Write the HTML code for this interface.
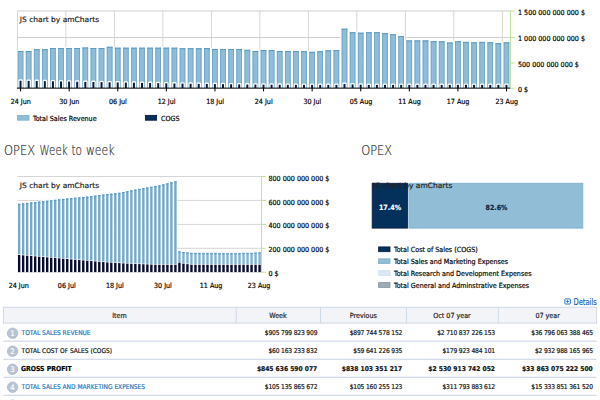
<!DOCTYPE html>
<html><head><meta charset="utf-8"><title>OPEX</title>
<style>
html,body{margin:0;padding:0;background:#fff;}
body{width:600px;height:400px;overflow:hidden;}
svg{display:block;font-family:"DejaVu Sans Condensed", "DejaVu Sans", "Liberation Sans", sans-serif;}
text{stroke-width:0.18px;}
</style></head><body>
<svg width="600" height="400" viewBox="0 0 600 400">
<rect x="16.98" y="11.0" width="0.84" height="77.0" fill="#cfcfcf"/>
<rect x="65.47" y="11.0" width="0.84" height="77.0" fill="#cfcfcf"/>
<rect x="113.96" y="11.0" width="0.84" height="77.0" fill="#cfcfcf"/>
<rect x="162.46" y="11.0" width="0.84" height="77.0" fill="#cfcfcf"/>
<rect x="210.95" y="11.0" width="0.84" height="77.0" fill="#cfcfcf"/>
<rect x="259.44" y="11.0" width="0.84" height="77.0" fill="#cfcfcf"/>
<rect x="307.93" y="11.0" width="0.84" height="77.0" fill="#cfcfcf"/>
<rect x="356.42" y="11.0" width="0.84" height="77.0" fill="#cfcfcf"/>
<rect x="404.92" y="11.0" width="0.84" height="77.0" fill="#cfcfcf"/>
<rect x="453.41" y="11.0" width="0.84" height="77.0" fill="#cfcfcf"/>
<rect x="501.90" y="11.0" width="0.84" height="77.0" fill="#cfcfcf"/>
<rect x="17.4" y="10.50" width="493.00" height="1" fill="#cfcfcf"/>
<rect x="17.4" y="37.00" width="493.00" height="1" fill="#cfcfcf"/>
<rect x="17.4" y="62.50" width="493.00" height="1" fill="#f1f1f1"/>
<rect x="16.52" y="50.00" width="8.02" height="38.00" fill="#fff"/>
<rect x="17.72" y="51.00" width="5.62" height="37.00" fill="#8fbcd6"/>
<rect x="17.72" y="51.00" width="0.9" height="37.00" fill="#70a7c6"/>
<rect x="22.44" y="51.00" width="0.9" height="37.00" fill="#70a7c6"/>
<rect x="17.72" y="51.00" width="5.62" height="1" fill="#5c9abf"/>
<rect x="18.28" y="79.31" width="4.5" height="8.69" rx="1.3" fill="#fff"/>
<rect x="19.53" y="80.71" width="2.0" height="7.29" fill="#0a1a3c"/>
<rect x="24.62" y="50.00" width="8.02" height="38.00" fill="#fff"/>
<rect x="25.82" y="51.00" width="5.62" height="37.00" fill="#8fbcd6"/>
<rect x="25.82" y="51.00" width="0.9" height="37.00" fill="#70a7c6"/>
<rect x="30.54" y="51.00" width="0.9" height="37.00" fill="#70a7c6"/>
<rect x="25.82" y="51.00" width="5.62" height="1" fill="#5c9abf"/>
<rect x="26.38" y="79.45" width="4.5" height="8.55" rx="1.3" fill="#fff"/>
<rect x="27.63" y="80.85" width="2.0" height="7.15" fill="#0a1a3c"/>
<rect x="32.72" y="48.20" width="8.02" height="39.80" fill="#fff"/>
<rect x="33.92" y="49.20" width="5.62" height="38.80" fill="#8fbcd6"/>
<rect x="33.92" y="49.20" width="0.9" height="38.80" fill="#70a7c6"/>
<rect x="38.64" y="49.20" width="0.9" height="38.80" fill="#70a7c6"/>
<rect x="33.92" y="49.20" width="5.62" height="1" fill="#5c9abf"/>
<rect x="34.48" y="79.60" width="4.5" height="8.40" rx="1.3" fill="#fff"/>
<rect x="35.73" y="81.00" width="2.0" height="7.00" fill="#0a1a3c"/>
<rect x="40.82" y="48.20" width="8.02" height="39.80" fill="#fff"/>
<rect x="42.02" y="49.20" width="5.62" height="38.80" fill="#8fbcd6"/>
<rect x="42.02" y="49.20" width="0.9" height="38.80" fill="#70a7c6"/>
<rect x="46.74" y="49.20" width="0.9" height="38.80" fill="#70a7c6"/>
<rect x="42.02" y="49.20" width="5.62" height="1" fill="#5c9abf"/>
<rect x="42.58" y="79.74" width="4.5" height="8.26" rx="1.3" fill="#fff"/>
<rect x="43.83" y="81.14" width="2.0" height="6.86" fill="#0a1a3c"/>
<rect x="48.92" y="47.00" width="8.02" height="41.00" fill="#fff"/>
<rect x="50.12" y="48.00" width="5.62" height="40.00" fill="#8fbcd6"/>
<rect x="50.12" y="48.00" width="0.9" height="40.00" fill="#70a7c6"/>
<rect x="54.84" y="48.00" width="0.9" height="40.00" fill="#70a7c6"/>
<rect x="50.12" y="48.00" width="5.62" height="1" fill="#5c9abf"/>
<rect x="50.68" y="79.88" width="4.5" height="8.12" rx="1.3" fill="#fff"/>
<rect x="51.93" y="81.28" width="2.0" height="6.72" fill="#0a1a3c"/>
<rect x="57.02" y="47.00" width="8.02" height="41.00" fill="#fff"/>
<rect x="58.22" y="48.00" width="5.62" height="40.00" fill="#8fbcd6"/>
<rect x="58.22" y="48.00" width="0.9" height="40.00" fill="#70a7c6"/>
<rect x="62.94" y="48.00" width="0.9" height="40.00" fill="#70a7c6"/>
<rect x="58.22" y="48.00" width="5.62" height="1" fill="#5c9abf"/>
<rect x="58.78" y="80.03" width="4.5" height="7.97" rx="1.3" fill="#fff"/>
<rect x="60.03" y="81.43" width="2.0" height="6.57" fill="#0a1a3c"/>
<rect x="65.11" y="47.00" width="8.02" height="41.00" fill="#fff"/>
<rect x="66.31" y="48.00" width="5.62" height="40.00" fill="#8fbcd6"/>
<rect x="66.31" y="48.00" width="0.9" height="40.00" fill="#70a7c6"/>
<rect x="71.03" y="48.00" width="0.9" height="40.00" fill="#70a7c6"/>
<rect x="66.31" y="48.00" width="5.62" height="1" fill="#5c9abf"/>
<rect x="66.87" y="80.17" width="4.5" height="7.83" rx="1.3" fill="#fff"/>
<rect x="68.12" y="81.57" width="2.0" height="6.43" fill="#0a1a3c"/>
<rect x="73.21" y="47.00" width="8.02" height="41.00" fill="#fff"/>
<rect x="74.41" y="48.00" width="5.62" height="40.00" fill="#8fbcd6"/>
<rect x="74.41" y="48.00" width="0.9" height="40.00" fill="#70a7c6"/>
<rect x="79.13" y="48.00" width="0.9" height="40.00" fill="#70a7c6"/>
<rect x="74.41" y="48.00" width="5.62" height="1" fill="#5c9abf"/>
<rect x="74.97" y="80.32" width="4.5" height="7.68" rx="1.3" fill="#fff"/>
<rect x="76.22" y="81.72" width="2.0" height="6.28" fill="#0a1a3c"/>
<rect x="81.31" y="46.50" width="8.02" height="41.50" fill="#fff"/>
<rect x="82.51" y="47.50" width="5.62" height="40.50" fill="#8fbcd6"/>
<rect x="82.51" y="47.50" width="0.9" height="40.50" fill="#70a7c6"/>
<rect x="87.23" y="47.50" width="0.9" height="40.50" fill="#70a7c6"/>
<rect x="82.51" y="47.50" width="5.62" height="1" fill="#5c9abf"/>
<rect x="83.07" y="80.46" width="4.5" height="7.54" rx="1.3" fill="#fff"/>
<rect x="84.32" y="81.86" width="2.0" height="6.14" fill="#0a1a3c"/>
<rect x="89.41" y="47.00" width="8.02" height="41.00" fill="#fff"/>
<rect x="90.61" y="48.00" width="5.62" height="40.00" fill="#8fbcd6"/>
<rect x="90.61" y="48.00" width="0.9" height="40.00" fill="#70a7c6"/>
<rect x="95.33" y="48.00" width="0.9" height="40.00" fill="#70a7c6"/>
<rect x="90.61" y="48.00" width="5.62" height="1" fill="#5c9abf"/>
<rect x="91.17" y="80.61" width="4.5" height="7.39" rx="1.3" fill="#fff"/>
<rect x="92.42" y="82.01" width="2.0" height="5.99" fill="#0a1a3c"/>
<rect x="97.51" y="47.00" width="8.02" height="41.00" fill="#fff"/>
<rect x="98.71" y="48.00" width="5.62" height="40.00" fill="#8fbcd6"/>
<rect x="98.71" y="48.00" width="0.9" height="40.00" fill="#70a7c6"/>
<rect x="103.43" y="48.00" width="0.9" height="40.00" fill="#70a7c6"/>
<rect x="98.71" y="48.00" width="5.62" height="1" fill="#5c9abf"/>
<rect x="99.27" y="80.75" width="4.5" height="7.25" rx="1.3" fill="#fff"/>
<rect x="100.52" y="82.15" width="2.0" height="5.85" fill="#0a1a3c"/>
<rect x="105.61" y="45.80" width="8.02" height="42.20" fill="#fff"/>
<rect x="106.81" y="46.80" width="5.62" height="41.20" fill="#8fbcd6"/>
<rect x="106.81" y="46.80" width="0.9" height="41.20" fill="#70a7c6"/>
<rect x="111.53" y="46.80" width="0.9" height="41.20" fill="#70a7c6"/>
<rect x="106.81" y="46.80" width="5.62" height="1" fill="#5c9abf"/>
<rect x="107.37" y="80.89" width="4.5" height="7.11" rx="1.3" fill="#fff"/>
<rect x="108.62" y="82.29" width="2.0" height="5.71" fill="#0a1a3c"/>
<rect x="113.71" y="46.70" width="8.02" height="41.30" fill="#fff"/>
<rect x="114.91" y="47.70" width="5.62" height="40.30" fill="#8fbcd6"/>
<rect x="114.91" y="47.70" width="0.9" height="40.30" fill="#70a7c6"/>
<rect x="119.63" y="47.70" width="0.9" height="40.30" fill="#70a7c6"/>
<rect x="114.91" y="47.70" width="5.62" height="1" fill="#5c9abf"/>
<rect x="115.47" y="81.04" width="4.5" height="6.96" rx="1.3" fill="#fff"/>
<rect x="116.72" y="82.44" width="2.0" height="5.56" fill="#0a1a3c"/>
<rect x="121.81" y="46.70" width="8.02" height="41.30" fill="#fff"/>
<rect x="123.01" y="47.70" width="5.62" height="40.30" fill="#8fbcd6"/>
<rect x="123.01" y="47.70" width="0.9" height="40.30" fill="#70a7c6"/>
<rect x="127.73" y="47.70" width="0.9" height="40.30" fill="#70a7c6"/>
<rect x="123.01" y="47.70" width="5.62" height="1" fill="#5c9abf"/>
<rect x="123.57" y="81.18" width="4.5" height="6.82" rx="1.3" fill="#fff"/>
<rect x="124.82" y="82.58" width="2.0" height="5.42" fill="#0a1a3c"/>
<rect x="129.91" y="46.70" width="8.02" height="41.30" fill="#fff"/>
<rect x="131.11" y="47.70" width="5.62" height="40.30" fill="#8fbcd6"/>
<rect x="131.11" y="47.70" width="0.9" height="40.30" fill="#70a7c6"/>
<rect x="135.83" y="47.70" width="0.9" height="40.30" fill="#70a7c6"/>
<rect x="131.11" y="47.70" width="5.62" height="1" fill="#5c9abf"/>
<rect x="131.67" y="81.33" width="4.5" height="6.67" rx="1.3" fill="#fff"/>
<rect x="132.92" y="82.73" width="2.0" height="5.27" fill="#0a1a3c"/>
<rect x="138.00" y="46.70" width="8.02" height="41.30" fill="#fff"/>
<rect x="139.20" y="47.70" width="5.62" height="40.30" fill="#8fbcd6"/>
<rect x="139.20" y="47.70" width="0.9" height="40.30" fill="#70a7c6"/>
<rect x="143.92" y="47.70" width="0.9" height="40.30" fill="#70a7c6"/>
<rect x="139.20" y="47.70" width="5.62" height="1" fill="#5c9abf"/>
<rect x="139.76" y="81.47" width="4.5" height="6.53" rx="1.3" fill="#fff"/>
<rect x="141.01" y="82.87" width="2.0" height="5.13" fill="#0a1a3c"/>
<rect x="146.10" y="46.70" width="8.02" height="41.30" fill="#fff"/>
<rect x="147.30" y="47.70" width="5.62" height="40.30" fill="#8fbcd6"/>
<rect x="147.30" y="47.70" width="0.9" height="40.30" fill="#70a7c6"/>
<rect x="152.02" y="47.70" width="0.9" height="40.30" fill="#70a7c6"/>
<rect x="147.30" y="47.70" width="5.62" height="1" fill="#5c9abf"/>
<rect x="147.86" y="81.62" width="4.5" height="6.38" rx="1.3" fill="#fff"/>
<rect x="149.11" y="83.02" width="2.0" height="4.98" fill="#0a1a3c"/>
<rect x="154.20" y="46.70" width="8.02" height="41.30" fill="#fff"/>
<rect x="155.40" y="47.70" width="5.62" height="40.30" fill="#8fbcd6"/>
<rect x="155.40" y="47.70" width="0.9" height="40.30" fill="#70a7c6"/>
<rect x="160.12" y="47.70" width="0.9" height="40.30" fill="#70a7c6"/>
<rect x="155.40" y="47.70" width="5.62" height="1" fill="#5c9abf"/>
<rect x="155.96" y="81.76" width="4.5" height="6.24" rx="1.3" fill="#fff"/>
<rect x="157.21" y="83.16" width="2.0" height="4.84" fill="#0a1a3c"/>
<rect x="162.30" y="46.70" width="8.02" height="41.30" fill="#fff"/>
<rect x="163.50" y="47.70" width="5.62" height="40.30" fill="#8fbcd6"/>
<rect x="163.50" y="47.70" width="0.9" height="40.30" fill="#70a7c6"/>
<rect x="168.22" y="47.70" width="0.9" height="40.30" fill="#70a7c6"/>
<rect x="163.50" y="47.70" width="5.62" height="1" fill="#5c9abf"/>
<rect x="164.06" y="81.90" width="4.5" height="6.10" rx="1.3" fill="#fff"/>
<rect x="165.31" y="83.30" width="2.0" height="4.70" fill="#0a1a3c"/>
<rect x="170.40" y="46.70" width="8.02" height="41.30" fill="#fff"/>
<rect x="171.60" y="47.70" width="5.62" height="40.30" fill="#8fbcd6"/>
<rect x="171.60" y="47.70" width="0.9" height="40.30" fill="#70a7c6"/>
<rect x="176.32" y="47.70" width="0.9" height="40.30" fill="#70a7c6"/>
<rect x="171.60" y="47.70" width="5.62" height="1" fill="#5c9abf"/>
<rect x="172.16" y="82.05" width="4.5" height="5.95" rx="1.3" fill="#fff"/>
<rect x="173.41" y="83.45" width="2.0" height="4.55" fill="#0a1a3c"/>
<rect x="178.50" y="47.20" width="8.02" height="40.80" fill="#fff"/>
<rect x="179.70" y="48.20" width="5.62" height="39.80" fill="#8fbcd6"/>
<rect x="179.70" y="48.20" width="0.9" height="39.80" fill="#70a7c6"/>
<rect x="184.42" y="48.20" width="0.9" height="39.80" fill="#70a7c6"/>
<rect x="179.70" y="48.20" width="5.62" height="1" fill="#5c9abf"/>
<rect x="180.26" y="82.19" width="4.5" height="5.81" rx="1.3" fill="#fff"/>
<rect x="181.51" y="83.59" width="2.0" height="4.41" fill="#0a1a3c"/>
<rect x="186.60" y="47.20" width="8.02" height="40.80" fill="#fff"/>
<rect x="187.80" y="48.20" width="5.62" height="39.80" fill="#8fbcd6"/>
<rect x="187.80" y="48.20" width="0.9" height="39.80" fill="#70a7c6"/>
<rect x="192.52" y="48.20" width="0.9" height="39.80" fill="#70a7c6"/>
<rect x="187.80" y="48.20" width="5.62" height="1" fill="#5c9abf"/>
<rect x="188.36" y="82.34" width="4.5" height="5.66" rx="1.3" fill="#fff"/>
<rect x="189.61" y="83.74" width="2.0" height="4.26" fill="#0a1a3c"/>
<rect x="194.70" y="47.20" width="8.02" height="40.80" fill="#fff"/>
<rect x="195.90" y="48.20" width="5.62" height="39.80" fill="#8fbcd6"/>
<rect x="195.90" y="48.20" width="0.9" height="39.80" fill="#70a7c6"/>
<rect x="200.62" y="48.20" width="0.9" height="39.80" fill="#70a7c6"/>
<rect x="195.90" y="48.20" width="5.62" height="1" fill="#5c9abf"/>
<rect x="196.46" y="82.48" width="4.5" height="5.52" rx="1.3" fill="#fff"/>
<rect x="197.71" y="83.88" width="2.0" height="4.12" fill="#0a1a3c"/>
<rect x="202.80" y="47.00" width="8.02" height="41.00" fill="#fff"/>
<rect x="204.00" y="48.00" width="5.62" height="40.00" fill="#8fbcd6"/>
<rect x="204.00" y="48.00" width="0.9" height="40.00" fill="#70a7c6"/>
<rect x="208.72" y="48.00" width="0.9" height="40.00" fill="#70a7c6"/>
<rect x="204.00" y="48.00" width="5.62" height="1" fill="#5c9abf"/>
<rect x="204.56" y="82.58" width="4.5" height="5.42" rx="1.3" fill="#fff"/>
<rect x="205.81" y="83.98" width="2.0" height="4.02" fill="#0a1a3c"/>
<rect x="210.90" y="48.00" width="8.02" height="40.00" fill="#fff"/>
<rect x="212.10" y="49.00" width="5.62" height="39.00" fill="#8fbcd6"/>
<rect x="212.10" y="49.00" width="0.9" height="39.00" fill="#70a7c6"/>
<rect x="216.82" y="49.00" width="0.9" height="39.00" fill="#70a7c6"/>
<rect x="212.10" y="49.00" width="5.62" height="1" fill="#5c9abf"/>
<rect x="212.66" y="82.68" width="4.5" height="5.32" rx="1.3" fill="#fff"/>
<rect x="213.91" y="84.08" width="2.0" height="3.92" fill="#0a1a3c"/>
<rect x="219.00" y="48.00" width="8.02" height="40.00" fill="#fff"/>
<rect x="220.19" y="49.00" width="5.62" height="39.00" fill="#8fbcd6"/>
<rect x="220.19" y="49.00" width="0.9" height="39.00" fill="#70a7c6"/>
<rect x="224.91" y="49.00" width="0.9" height="39.00" fill="#70a7c6"/>
<rect x="220.19" y="49.00" width="5.62" height="1" fill="#5c9abf"/>
<rect x="220.75" y="82.78" width="4.5" height="5.22" rx="1.3" fill="#fff"/>
<rect x="222.00" y="84.18" width="2.0" height="3.82" fill="#0a1a3c"/>
<rect x="227.09" y="48.00" width="8.02" height="40.00" fill="#fff"/>
<rect x="228.29" y="49.00" width="5.62" height="39.00" fill="#8fbcd6"/>
<rect x="228.29" y="49.00" width="0.9" height="39.00" fill="#70a7c6"/>
<rect x="233.01" y="49.00" width="0.9" height="39.00" fill="#70a7c6"/>
<rect x="228.29" y="49.00" width="5.62" height="1" fill="#5c9abf"/>
<rect x="228.85" y="82.88" width="4.5" height="5.12" rx="1.3" fill="#fff"/>
<rect x="230.10" y="84.28" width="2.0" height="3.72" fill="#0a1a3c"/>
<rect x="235.19" y="48.00" width="8.02" height="40.00" fill="#fff"/>
<rect x="236.39" y="49.00" width="5.62" height="39.00" fill="#8fbcd6"/>
<rect x="236.39" y="49.00" width="0.9" height="39.00" fill="#70a7c6"/>
<rect x="241.11" y="49.00" width="0.9" height="39.00" fill="#70a7c6"/>
<rect x="236.39" y="49.00" width="5.62" height="1" fill="#5c9abf"/>
<rect x="236.95" y="82.98" width="4.5" height="5.02" rx="1.3" fill="#fff"/>
<rect x="238.20" y="84.38" width="2.0" height="3.62" fill="#0a1a3c"/>
<rect x="243.29" y="48.80" width="8.02" height="39.20" fill="#fff"/>
<rect x="244.49" y="49.80" width="5.62" height="38.20" fill="#8fbcd6"/>
<rect x="244.49" y="49.80" width="0.9" height="38.20" fill="#70a7c6"/>
<rect x="249.21" y="49.80" width="0.9" height="38.20" fill="#70a7c6"/>
<rect x="244.49" y="49.80" width="5.62" height="1" fill="#5c9abf"/>
<rect x="245.05" y="83.08" width="4.5" height="4.92" rx="1.3" fill="#fff"/>
<rect x="246.30" y="84.48" width="2.0" height="3.52" fill="#0a1a3c"/>
<rect x="251.39" y="50.00" width="8.02" height="38.00" fill="#fff"/>
<rect x="252.59" y="51.00" width="5.62" height="37.00" fill="#8fbcd6"/>
<rect x="252.59" y="51.00" width="0.9" height="37.00" fill="#70a7c6"/>
<rect x="257.31" y="51.00" width="0.9" height="37.00" fill="#70a7c6"/>
<rect x="252.59" y="51.00" width="5.62" height="1" fill="#5c9abf"/>
<rect x="253.15" y="83.15" width="4.5" height="4.85" rx="1.3" fill="#fff"/>
<rect x="254.40" y="84.55" width="2.0" height="3.45" fill="#0a1a3c"/>
<rect x="259.49" y="49.00" width="8.02" height="39.00" fill="#fff"/>
<rect x="260.69" y="50.00" width="5.62" height="38.00" fill="#8fbcd6"/>
<rect x="260.69" y="50.00" width="0.9" height="38.00" fill="#70a7c6"/>
<rect x="265.41" y="50.00" width="0.9" height="38.00" fill="#70a7c6"/>
<rect x="260.69" y="50.00" width="5.62" height="1" fill="#5c9abf"/>
<rect x="261.25" y="83.21" width="4.5" height="4.79" rx="1.3" fill="#fff"/>
<rect x="262.50" y="84.61" width="2.0" height="3.39" fill="#0a1a3c"/>
<rect x="267.59" y="49.00" width="8.02" height="39.00" fill="#fff"/>
<rect x="268.79" y="50.00" width="5.62" height="38.00" fill="#8fbcd6"/>
<rect x="268.79" y="50.00" width="0.9" height="38.00" fill="#70a7c6"/>
<rect x="273.51" y="50.00" width="0.9" height="38.00" fill="#70a7c6"/>
<rect x="268.79" y="50.00" width="5.62" height="1" fill="#5c9abf"/>
<rect x="269.35" y="83.28" width="4.5" height="4.72" rx="1.3" fill="#fff"/>
<rect x="270.60" y="84.68" width="2.0" height="3.32" fill="#0a1a3c"/>
<rect x="275.69" y="50.00" width="8.02" height="38.00" fill="#fff"/>
<rect x="276.89" y="51.00" width="5.62" height="37.00" fill="#8fbcd6"/>
<rect x="276.89" y="51.00" width="0.9" height="37.00" fill="#70a7c6"/>
<rect x="281.61" y="51.00" width="0.9" height="37.00" fill="#70a7c6"/>
<rect x="276.89" y="51.00" width="5.62" height="1" fill="#5c9abf"/>
<rect x="277.45" y="83.34" width="4.5" height="4.66" rx="1.3" fill="#fff"/>
<rect x="278.70" y="84.74" width="2.0" height="3.26" fill="#0a1a3c"/>
<rect x="283.79" y="50.00" width="8.02" height="38.00" fill="#fff"/>
<rect x="284.99" y="51.00" width="5.62" height="37.00" fill="#8fbcd6"/>
<rect x="284.99" y="51.00" width="0.9" height="37.00" fill="#70a7c6"/>
<rect x="289.71" y="51.00" width="0.9" height="37.00" fill="#70a7c6"/>
<rect x="284.99" y="51.00" width="5.62" height="1" fill="#5c9abf"/>
<rect x="285.55" y="83.40" width="4.5" height="4.60" rx="1.3" fill="#fff"/>
<rect x="286.80" y="84.80" width="2.0" height="3.20" fill="#0a1a3c"/>
<rect x="291.89" y="50.20" width="8.02" height="37.80" fill="#fff"/>
<rect x="293.09" y="51.20" width="5.62" height="36.80" fill="#8fbcd6"/>
<rect x="293.09" y="51.20" width="0.9" height="36.80" fill="#70a7c6"/>
<rect x="297.81" y="51.20" width="0.9" height="36.80" fill="#70a7c6"/>
<rect x="293.09" y="51.20" width="5.62" height="1" fill="#5c9abf"/>
<rect x="293.65" y="83.47" width="4.5" height="4.53" rx="1.3" fill="#fff"/>
<rect x="294.90" y="84.87" width="2.0" height="3.13" fill="#0a1a3c"/>
<rect x="299.99" y="50.20" width="8.02" height="37.80" fill="#fff"/>
<rect x="301.19" y="51.20" width="5.62" height="36.80" fill="#8fbcd6"/>
<rect x="301.19" y="51.20" width="0.9" height="36.80" fill="#70a7c6"/>
<rect x="305.91" y="51.20" width="0.9" height="36.80" fill="#70a7c6"/>
<rect x="301.19" y="51.20" width="5.62" height="1" fill="#5c9abf"/>
<rect x="301.75" y="83.47" width="4.5" height="4.53" rx="1.3" fill="#fff"/>
<rect x="303.00" y="84.87" width="2.0" height="3.13" fill="#0a1a3c"/>
<rect x="308.08" y="50.80" width="8.02" height="37.20" fill="#fff"/>
<rect x="309.28" y="51.80" width="5.62" height="36.20" fill="#8fbcd6"/>
<rect x="309.28" y="51.80" width="0.9" height="36.20" fill="#70a7c6"/>
<rect x="314.00" y="51.80" width="0.9" height="36.20" fill="#70a7c6"/>
<rect x="309.28" y="51.80" width="5.62" height="1" fill="#5c9abf"/>
<rect x="309.84" y="83.47" width="4.5" height="4.53" rx="1.3" fill="#fff"/>
<rect x="311.09" y="84.87" width="2.0" height="3.13" fill="#0a1a3c"/>
<rect x="316.18" y="50.20" width="8.02" height="37.80" fill="#fff"/>
<rect x="317.38" y="51.20" width="5.62" height="36.80" fill="#8fbcd6"/>
<rect x="317.38" y="51.20" width="0.9" height="36.80" fill="#70a7c6"/>
<rect x="322.10" y="51.20" width="0.9" height="36.80" fill="#70a7c6"/>
<rect x="317.38" y="51.20" width="5.62" height="1" fill="#5c9abf"/>
<rect x="317.94" y="83.47" width="4.5" height="4.53" rx="1.3" fill="#fff"/>
<rect x="319.19" y="84.87" width="2.0" height="3.13" fill="#0a1a3c"/>
<rect x="324.28" y="49.30" width="8.02" height="38.70" fill="#fff"/>
<rect x="325.48" y="50.30" width="5.62" height="37.70" fill="#8fbcd6"/>
<rect x="325.48" y="50.30" width="0.9" height="37.70" fill="#70a7c6"/>
<rect x="330.20" y="50.30" width="0.9" height="37.70" fill="#70a7c6"/>
<rect x="325.48" y="50.30" width="5.62" height="1" fill="#5c9abf"/>
<rect x="326.04" y="83.47" width="4.5" height="4.53" rx="1.3" fill="#fff"/>
<rect x="327.29" y="84.87" width="2.0" height="3.13" fill="#0a1a3c"/>
<rect x="332.38" y="49.00" width="8.02" height="39.00" fill="#fff"/>
<rect x="333.58" y="50.00" width="5.62" height="38.00" fill="#8fbcd6"/>
<rect x="333.58" y="50.00" width="0.9" height="38.00" fill="#70a7c6"/>
<rect x="338.30" y="50.00" width="0.9" height="38.00" fill="#70a7c6"/>
<rect x="333.58" y="50.00" width="5.62" height="1" fill="#5c9abf"/>
<rect x="334.14" y="83.47" width="4.5" height="4.53" rx="1.3" fill="#fff"/>
<rect x="335.39" y="84.87" width="2.0" height="3.13" fill="#0a1a3c"/>
<rect x="340.48" y="27.70" width="8.02" height="60.30" fill="#fff"/>
<rect x="341.68" y="28.70" width="5.62" height="59.30" fill="#8fbcd6"/>
<rect x="341.68" y="28.70" width="0.9" height="59.30" fill="#70a7c6"/>
<rect x="346.40" y="28.70" width="0.9" height="59.30" fill="#70a7c6"/>
<rect x="341.68" y="28.70" width="5.62" height="1" fill="#5c9abf"/>
<rect x="342.24" y="82.57" width="4.5" height="5.43" rx="1.3" fill="#fff"/>
<rect x="343.49" y="83.97" width="2.0" height="4.03" fill="#0a1a3c"/>
<rect x="348.58" y="31.20" width="8.02" height="56.80" fill="#fff"/>
<rect x="349.78" y="32.20" width="5.62" height="55.80" fill="#8fbcd6"/>
<rect x="349.78" y="32.20" width="0.9" height="55.80" fill="#70a7c6"/>
<rect x="354.50" y="32.20" width="0.9" height="55.80" fill="#70a7c6"/>
<rect x="349.78" y="32.20" width="5.62" height="1" fill="#5c9abf"/>
<rect x="350.34" y="83.00" width="4.5" height="5.00" rx="1.3" fill="#fff"/>
<rect x="351.59" y="84.40" width="2.0" height="3.60" fill="#0a1a3c"/>
<rect x="356.68" y="31.70" width="8.02" height="56.30" fill="#fff"/>
<rect x="357.88" y="32.70" width="5.62" height="55.30" fill="#8fbcd6"/>
<rect x="357.88" y="32.70" width="0.9" height="55.30" fill="#70a7c6"/>
<rect x="362.60" y="32.70" width="0.9" height="55.30" fill="#70a7c6"/>
<rect x="357.88" y="32.70" width="5.62" height="1" fill="#5c9abf"/>
<rect x="358.44" y="83.25" width="4.5" height="4.75" rx="1.3" fill="#fff"/>
<rect x="359.69" y="84.65" width="2.0" height="3.35" fill="#0a1a3c"/>
<rect x="364.78" y="31.20" width="8.02" height="56.80" fill="#fff"/>
<rect x="365.98" y="32.20" width="5.62" height="55.80" fill="#8fbcd6"/>
<rect x="365.98" y="32.20" width="0.9" height="55.80" fill="#70a7c6"/>
<rect x="370.70" y="32.20" width="0.9" height="55.80" fill="#70a7c6"/>
<rect x="365.98" y="32.20" width="5.62" height="1" fill="#5c9abf"/>
<rect x="366.54" y="83.47" width="4.5" height="4.53" rx="1.3" fill="#fff"/>
<rect x="367.79" y="84.87" width="2.0" height="3.13" fill="#0a1a3c"/>
<rect x="372.88" y="31.20" width="8.02" height="56.80" fill="#fff"/>
<rect x="374.08" y="32.20" width="5.62" height="55.80" fill="#8fbcd6"/>
<rect x="374.08" y="32.20" width="0.9" height="55.80" fill="#70a7c6"/>
<rect x="378.80" y="32.20" width="0.9" height="55.80" fill="#70a7c6"/>
<rect x="374.08" y="32.20" width="5.62" height="1" fill="#5c9abf"/>
<rect x="374.64" y="83.47" width="4.5" height="4.53" rx="1.3" fill="#fff"/>
<rect x="375.89" y="84.87" width="2.0" height="3.13" fill="#0a1a3c"/>
<rect x="380.97" y="32.20" width="8.02" height="55.80" fill="#fff"/>
<rect x="382.17" y="33.20" width="5.62" height="54.80" fill="#8fbcd6"/>
<rect x="382.17" y="33.20" width="0.9" height="54.80" fill="#70a7c6"/>
<rect x="386.89" y="33.20" width="0.9" height="54.80" fill="#70a7c6"/>
<rect x="382.17" y="33.20" width="5.62" height="1" fill="#5c9abf"/>
<rect x="382.73" y="83.47" width="4.5" height="4.53" rx="1.3" fill="#fff"/>
<rect x="383.98" y="84.87" width="2.0" height="3.13" fill="#0a1a3c"/>
<rect x="389.07" y="33.20" width="8.02" height="54.80" fill="#fff"/>
<rect x="390.27" y="34.20" width="5.62" height="53.80" fill="#8fbcd6"/>
<rect x="390.27" y="34.20" width="0.9" height="53.80" fill="#70a7c6"/>
<rect x="394.99" y="34.20" width="0.9" height="53.80" fill="#70a7c6"/>
<rect x="390.27" y="34.20" width="5.62" height="1" fill="#5c9abf"/>
<rect x="390.83" y="83.47" width="4.5" height="4.53" rx="1.3" fill="#fff"/>
<rect x="392.08" y="84.87" width="2.0" height="3.13" fill="#0a1a3c"/>
<rect x="397.17" y="35.10" width="8.02" height="52.90" fill="#fff"/>
<rect x="398.37" y="36.10" width="5.62" height="51.90" fill="#8fbcd6"/>
<rect x="398.37" y="36.10" width="0.9" height="51.90" fill="#70a7c6"/>
<rect x="403.09" y="36.10" width="0.9" height="51.90" fill="#70a7c6"/>
<rect x="398.37" y="36.10" width="5.62" height="1" fill="#5c9abf"/>
<rect x="398.93" y="83.47" width="4.5" height="4.53" rx="1.3" fill="#fff"/>
<rect x="400.18" y="84.87" width="2.0" height="3.13" fill="#0a1a3c"/>
<rect x="405.27" y="39.40" width="8.02" height="48.60" fill="#fff"/>
<rect x="406.47" y="40.40" width="5.62" height="47.60" fill="#8fbcd6"/>
<rect x="406.47" y="40.40" width="0.9" height="47.60" fill="#70a7c6"/>
<rect x="411.19" y="40.40" width="0.9" height="47.60" fill="#70a7c6"/>
<rect x="406.47" y="40.40" width="5.62" height="1" fill="#5c9abf"/>
<rect x="407.03" y="83.47" width="4.5" height="4.53" rx="1.3" fill="#fff"/>
<rect x="408.28" y="84.87" width="2.0" height="3.13" fill="#0a1a3c"/>
<rect x="413.37" y="39.40" width="8.02" height="48.60" fill="#fff"/>
<rect x="414.57" y="40.40" width="5.62" height="47.60" fill="#8fbcd6"/>
<rect x="414.57" y="40.40" width="0.9" height="47.60" fill="#70a7c6"/>
<rect x="419.29" y="40.40" width="0.9" height="47.60" fill="#70a7c6"/>
<rect x="414.57" y="40.40" width="5.62" height="1" fill="#5c9abf"/>
<rect x="415.13" y="83.47" width="4.5" height="4.53" rx="1.3" fill="#fff"/>
<rect x="416.38" y="84.87" width="2.0" height="3.13" fill="#0a1a3c"/>
<rect x="421.47" y="39.40" width="8.02" height="48.60" fill="#fff"/>
<rect x="422.67" y="40.40" width="5.62" height="47.60" fill="#8fbcd6"/>
<rect x="422.67" y="40.40" width="0.9" height="47.60" fill="#70a7c6"/>
<rect x="427.39" y="40.40" width="0.9" height="47.60" fill="#70a7c6"/>
<rect x="422.67" y="40.40" width="5.62" height="1" fill="#5c9abf"/>
<rect x="423.23" y="83.47" width="4.5" height="4.53" rx="1.3" fill="#fff"/>
<rect x="424.48" y="84.87" width="2.0" height="3.13" fill="#0a1a3c"/>
<rect x="429.57" y="40.20" width="8.02" height="47.80" fill="#fff"/>
<rect x="430.77" y="41.20" width="5.62" height="46.80" fill="#8fbcd6"/>
<rect x="430.77" y="41.20" width="0.9" height="46.80" fill="#70a7c6"/>
<rect x="435.49" y="41.20" width="0.9" height="46.80" fill="#70a7c6"/>
<rect x="430.77" y="41.20" width="5.62" height="1" fill="#5c9abf"/>
<rect x="431.33" y="83.47" width="4.5" height="4.53" rx="1.3" fill="#fff"/>
<rect x="432.58" y="84.87" width="2.0" height="3.13" fill="#0a1a3c"/>
<rect x="437.67" y="40.20" width="8.02" height="47.80" fill="#fff"/>
<rect x="438.87" y="41.20" width="5.62" height="46.80" fill="#8fbcd6"/>
<rect x="438.87" y="41.20" width="0.9" height="46.80" fill="#70a7c6"/>
<rect x="443.59" y="41.20" width="0.9" height="46.80" fill="#70a7c6"/>
<rect x="438.87" y="41.20" width="5.62" height="1" fill="#5c9abf"/>
<rect x="439.43" y="83.47" width="4.5" height="4.53" rx="1.3" fill="#fff"/>
<rect x="440.68" y="84.87" width="2.0" height="3.13" fill="#0a1a3c"/>
<rect x="445.77" y="41.50" width="8.02" height="46.50" fill="#fff"/>
<rect x="446.97" y="42.50" width="5.62" height="45.50" fill="#8fbcd6"/>
<rect x="446.97" y="42.50" width="0.9" height="45.50" fill="#70a7c6"/>
<rect x="451.69" y="42.50" width="0.9" height="45.50" fill="#70a7c6"/>
<rect x="446.97" y="42.50" width="5.62" height="1" fill="#5c9abf"/>
<rect x="447.53" y="83.47" width="4.5" height="4.53" rx="1.3" fill="#fff"/>
<rect x="448.78" y="84.87" width="2.0" height="3.13" fill="#0a1a3c"/>
<rect x="453.87" y="40.20" width="8.02" height="47.80" fill="#fff"/>
<rect x="455.07" y="41.20" width="5.62" height="46.80" fill="#8fbcd6"/>
<rect x="455.07" y="41.20" width="0.9" height="46.80" fill="#70a7c6"/>
<rect x="459.79" y="41.20" width="0.9" height="46.80" fill="#70a7c6"/>
<rect x="455.07" y="41.20" width="5.62" height="1" fill="#5c9abf"/>
<rect x="455.63" y="83.47" width="4.5" height="4.53" rx="1.3" fill="#fff"/>
<rect x="456.88" y="84.87" width="2.0" height="3.13" fill="#0a1a3c"/>
<rect x="461.96" y="40.90" width="8.02" height="47.10" fill="#fff"/>
<rect x="463.16" y="41.90" width="5.62" height="46.10" fill="#8fbcd6"/>
<rect x="463.16" y="41.90" width="0.9" height="46.10" fill="#70a7c6"/>
<rect x="467.88" y="41.90" width="0.9" height="46.10" fill="#70a7c6"/>
<rect x="463.16" y="41.90" width="5.62" height="1" fill="#5c9abf"/>
<rect x="463.72" y="83.47" width="4.5" height="4.53" rx="1.3" fill="#fff"/>
<rect x="464.97" y="84.87" width="2.0" height="3.13" fill="#0a1a3c"/>
<rect x="470.06" y="41.30" width="8.02" height="46.70" fill="#fff"/>
<rect x="471.26" y="42.30" width="5.62" height="45.70" fill="#8fbcd6"/>
<rect x="471.26" y="42.30" width="0.9" height="45.70" fill="#70a7c6"/>
<rect x="475.98" y="42.30" width="0.9" height="45.70" fill="#70a7c6"/>
<rect x="471.26" y="42.30" width="5.62" height="1" fill="#5c9abf"/>
<rect x="471.82" y="83.47" width="4.5" height="4.53" rx="1.3" fill="#fff"/>
<rect x="473.07" y="84.87" width="2.0" height="3.13" fill="#0a1a3c"/>
<rect x="478.16" y="40.90" width="8.02" height="47.10" fill="#fff"/>
<rect x="479.36" y="41.90" width="5.62" height="46.10" fill="#8fbcd6"/>
<rect x="479.36" y="41.90" width="0.9" height="46.10" fill="#70a7c6"/>
<rect x="484.08" y="41.90" width="0.9" height="46.10" fill="#70a7c6"/>
<rect x="479.36" y="41.90" width="5.62" height="1" fill="#5c9abf"/>
<rect x="479.92" y="83.47" width="4.5" height="4.53" rx="1.3" fill="#fff"/>
<rect x="481.17" y="84.87" width="2.0" height="3.13" fill="#0a1a3c"/>
<rect x="486.26" y="41.30" width="8.02" height="46.70" fill="#fff"/>
<rect x="487.46" y="42.30" width="5.62" height="45.70" fill="#8fbcd6"/>
<rect x="487.46" y="42.30" width="0.9" height="45.70" fill="#70a7c6"/>
<rect x="492.18" y="42.30" width="0.9" height="45.70" fill="#70a7c6"/>
<rect x="487.46" y="42.30" width="5.62" height="1" fill="#5c9abf"/>
<rect x="488.02" y="83.47" width="4.5" height="4.53" rx="1.3" fill="#fff"/>
<rect x="489.27" y="84.87" width="2.0" height="3.13" fill="#0a1a3c"/>
<rect x="494.36" y="42.20" width="8.02" height="45.80" fill="#fff"/>
<rect x="495.56" y="43.20" width="5.62" height="44.80" fill="#8fbcd6"/>
<rect x="495.56" y="43.20" width="0.9" height="44.80" fill="#70a7c6"/>
<rect x="500.28" y="43.20" width="0.9" height="44.80" fill="#70a7c6"/>
<rect x="495.56" y="43.20" width="5.62" height="1" fill="#5c9abf"/>
<rect x="496.12" y="83.47" width="4.5" height="4.53" rx="1.3" fill="#fff"/>
<rect x="497.37" y="84.87" width="2.0" height="3.13" fill="#0a1a3c"/>
<rect x="502.46" y="41.30" width="8.02" height="46.70" fill="#fff"/>
<rect x="503.66" y="42.30" width="5.62" height="45.70" fill="#8fbcd6"/>
<rect x="503.66" y="42.30" width="0.9" height="45.70" fill="#70a7c6"/>
<rect x="508.38" y="42.30" width="0.9" height="45.70" fill="#70a7c6"/>
<rect x="503.66" y="42.30" width="5.62" height="1" fill="#5c9abf"/>
<rect x="504.22" y="83.47" width="4.5" height="4.53" rx="1.3" fill="#fff"/>
<rect x="505.47" y="84.87" width="2.0" height="3.13" fill="#0a1a3c"/>
<rect x="16.9" y="87.65" width="493.50" height="1.0" fill="#000"/>
<rect x="20.08" y="88.0" width="1" height="3.4" fill="#000"/>
<text x="20.78" y="104" font-size="7.1" text-anchor="middle" fill="#000" stroke="#000">24 Jun</text>
<rect x="68.67" y="88.0" width="1" height="3.4" fill="#000"/>
<text x="69.37" y="104" font-size="7.1" text-anchor="middle" fill="#000" stroke="#000">30 Jun</text>
<rect x="117.27" y="88.0" width="1" height="3.4" fill="#000"/>
<text x="117.97" y="104" font-size="7.1" text-anchor="middle" fill="#000" stroke="#000">06 Jul</text>
<rect x="165.86" y="88.0" width="1" height="3.4" fill="#000"/>
<text x="166.56" y="104" font-size="7.1" text-anchor="middle" fill="#000" stroke="#000">12 Jul</text>
<rect x="214.46" y="88.0" width="1" height="3.4" fill="#000"/>
<text x="215.16" y="104" font-size="7.1" text-anchor="middle" fill="#000" stroke="#000">18 Jul</text>
<rect x="263.05" y="88.0" width="1" height="3.4" fill="#000"/>
<text x="263.75" y="104" font-size="7.1" text-anchor="middle" fill="#000" stroke="#000">24 Jul</text>
<rect x="311.64" y="88.0" width="1" height="3.4" fill="#000"/>
<text x="312.34" y="104" font-size="7.1" text-anchor="middle" fill="#000" stroke="#000">30 Jul</text>
<rect x="360.24" y="88.0" width="1" height="3.4" fill="#000"/>
<text x="360.94" y="104" font-size="7.1" text-anchor="middle" fill="#000" stroke="#000">05 Aug</text>
<rect x="408.83" y="88.0" width="1" height="3.4" fill="#000"/>
<text x="409.53" y="104" font-size="7.1" text-anchor="middle" fill="#000" stroke="#000">11 Aug</text>
<rect x="457.43" y="88.0" width="1" height="3.4" fill="#000"/>
<text x="458.13" y="104" font-size="7.1" text-anchor="middle" fill="#000" stroke="#000">17 Aug</text>
<rect x="506.02" y="88.0" width="1" height="3.4" fill="#000"/>
<text x="506.72" y="104" font-size="7.1" text-anchor="middle" fill="#000" stroke="#000">23 Aug</text>
<rect x="509.90" y="10.5" width="1" height="78.0" fill="#bee395"/>
<rect x="510.40" y="10.5" width="4.3" height="1" fill="#bee395"/>
<text x="518" y="15.4" font-size="7.1" text-anchor="start" fill="#000" stroke="#000">1 500 000 000 000 $</text>
<rect x="510.40" y="37.0" width="4.3" height="1" fill="#bee395"/>
<text x="518" y="40.9" font-size="7.1" text-anchor="start" fill="#000" stroke="#000">1 000 000 000 000 $</text>
<rect x="510.40" y="62.5" width="4.3" height="1" fill="#bee395"/>
<text x="518" y="66.6" font-size="7.1" text-anchor="start" fill="#000" stroke="#000">500 000 000 000 $</text>
<rect x="510.40" y="87.8" width="4.3" height="1" fill="#bee395"/>
<text x="518" y="92.2" font-size="7.1" text-anchor="start" fill="#000" stroke="#000">0 $</text>
<text x="19.8" y="21.5" font-size="7.3" text-anchor="start" fill="#222" stroke="#222" textLength="79.3" lengthAdjust="spacingAndGlyphs" font-family='"DejaVu Sans", "Liberation Sans", sans-serif'>JS chart by amCharts</text>
<rect x="17.4" y="115.4" width="11.6" height="4.8" fill="#92bdd6" stroke="#7fb2cd" stroke-width="0.8"/>
<text x="33" y="121.2" font-size="7.1" text-anchor="start" fill="#000" stroke="#000">Total Sales Revenue</text>
<rect x="145.4" y="115.4" width="11.2" height="4.8" fill="#04305a" stroke="#0b1d40" stroke-width="0.9"/>
<text x="161" y="121.2" font-size="7.1" text-anchor="start" fill="#000" stroke="#000">COGS</text>
<g font-size="13.2" font-family='"DejaVu Sans Light", "DejaVu Sans", "Liberation Sans", sans-serif' font-weight="200" fill="#262626" stroke="#262626" stroke-width="0.14">
<text y="155"><tspan x="4" textLength="31" lengthAdjust="spacingAndGlyphs">OPEX</tspan> <tspan x="39.6" textLength="28" lengthAdjust="spacingAndGlyphs">Week</tspan> <tspan x="71.4" textLength="10.6" lengthAdjust="spacingAndGlyphs">to</tspan> <tspan x="86" textLength="28.4" lengthAdjust="spacingAndGlyphs">week</tspan></text>
<text x="361.2" y="155" textLength="30.8" lengthAdjust="spacingAndGlyphs">OPEX</text>
</g>
<rect x="17.4" y="176.00" width="244.43" height="1" fill="#d6d6d6"/>
<rect x="17.4" y="199.90" width="244.43" height="1" fill="#d6d6d6"/>
<rect x="17.4" y="223.90" width="244.43" height="1" fill="#d6d6d6"/>
<rect x="17.4" y="247.80" width="244.43" height="1" fill="#d6d6d6"/>
<rect x="17.4" y="271.70" width="244.43" height="1" fill="#bbb"/>
<rect x="17.15" y="203.00" width="4.1" height="69.60" fill="#fff"/>
<rect x="17.95" y="203.80" width="2.4" height="50.60" fill="#74a9c7"/>
<rect x="17.95" y="203.80" width="2.4" height="1" fill="#5595b9"/>
<rect x="17.95" y="255.00" width="2.4" height="17.10" fill="#070c2c"/>
<rect x="21.16" y="202.57" width="4.1" height="70.03" fill="#fff"/>
<rect x="21.96" y="203.37" width="2.4" height="51.37" fill="#74a9c7"/>
<rect x="21.96" y="203.37" width="2.4" height="1" fill="#5595b9"/>
<rect x="21.96" y="255.34" width="2.4" height="16.76" fill="#070c2c"/>
<rect x="25.16" y="202.13" width="4.1" height="70.47" fill="#fff"/>
<rect x="25.96" y="202.93" width="2.4" height="52.14" fill="#74a9c7"/>
<rect x="25.96" y="202.93" width="2.4" height="1" fill="#5595b9"/>
<rect x="25.96" y="255.67" width="2.4" height="16.43" fill="#070c2c"/>
<rect x="29.17" y="201.70" width="4.1" height="70.90" fill="#fff"/>
<rect x="29.97" y="202.50" width="2.4" height="52.91" fill="#74a9c7"/>
<rect x="29.97" y="202.50" width="2.4" height="1" fill="#5595b9"/>
<rect x="29.97" y="256.01" width="2.4" height="16.09" fill="#070c2c"/>
<rect x="33.18" y="201.27" width="4.1" height="71.33" fill="#fff"/>
<rect x="33.98" y="202.07" width="2.4" height="53.68" fill="#74a9c7"/>
<rect x="33.98" y="202.07" width="2.4" height="1" fill="#5595b9"/>
<rect x="33.98" y="256.35" width="2.4" height="15.75" fill="#070c2c"/>
<rect x="37.19" y="200.83" width="4.1" height="71.77" fill="#fff"/>
<rect x="37.98" y="201.63" width="2.4" height="54.45" fill="#74a9c7"/>
<rect x="37.98" y="201.63" width="2.4" height="1" fill="#5595b9"/>
<rect x="37.98" y="256.68" width="2.4" height="15.42" fill="#070c2c"/>
<rect x="41.19" y="200.40" width="4.1" height="72.20" fill="#fff"/>
<rect x="41.99" y="201.20" width="2.4" height="55.22" fill="#74a9c7"/>
<rect x="41.99" y="201.20" width="2.4" height="1" fill="#5595b9"/>
<rect x="41.99" y="257.02" width="2.4" height="15.08" fill="#070c2c"/>
<rect x="45.20" y="199.94" width="4.1" height="72.66" fill="#fff"/>
<rect x="46.00" y="200.74" width="2.4" height="56.01" fill="#74a9c7"/>
<rect x="46.00" y="200.74" width="2.4" height="1" fill="#5595b9"/>
<rect x="46.00" y="257.35" width="2.4" height="14.75" fill="#070c2c"/>
<rect x="49.21" y="199.48" width="4.1" height="73.12" fill="#fff"/>
<rect x="50.01" y="200.28" width="2.4" height="56.81" fill="#74a9c7"/>
<rect x="50.01" y="200.28" width="2.4" height="1" fill="#5595b9"/>
<rect x="50.01" y="257.69" width="2.4" height="14.41" fill="#070c2c"/>
<rect x="53.21" y="199.02" width="4.1" height="73.58" fill="#fff"/>
<rect x="54.01" y="199.82" width="2.4" height="57.61" fill="#74a9c7"/>
<rect x="54.01" y="199.82" width="2.4" height="1" fill="#5595b9"/>
<rect x="54.01" y="258.03" width="2.4" height="14.07" fill="#070c2c"/>
<rect x="57.22" y="198.56" width="4.1" height="74.04" fill="#fff"/>
<rect x="58.02" y="199.36" width="2.4" height="58.40" fill="#74a9c7"/>
<rect x="58.02" y="199.36" width="2.4" height="1" fill="#5595b9"/>
<rect x="58.02" y="258.36" width="2.4" height="13.74" fill="#070c2c"/>
<rect x="61.23" y="198.10" width="4.1" height="74.50" fill="#fff"/>
<rect x="62.03" y="198.90" width="2.4" height="59.20" fill="#74a9c7"/>
<rect x="62.03" y="198.90" width="2.4" height="1" fill="#5595b9"/>
<rect x="62.03" y="258.70" width="2.4" height="13.40" fill="#070c2c"/>
<rect x="65.23" y="197.72" width="4.1" height="74.88" fill="#fff"/>
<rect x="66.03" y="198.52" width="2.4" height="59.92" fill="#74a9c7"/>
<rect x="66.03" y="198.52" width="2.4" height="1" fill="#5595b9"/>
<rect x="66.03" y="259.04" width="2.4" height="13.06" fill="#070c2c"/>
<rect x="69.24" y="197.33" width="4.1" height="75.27" fill="#fff"/>
<rect x="70.04" y="198.13" width="2.4" height="60.64" fill="#74a9c7"/>
<rect x="70.04" y="198.13" width="2.4" height="1" fill="#5595b9"/>
<rect x="70.04" y="259.37" width="2.4" height="12.73" fill="#070c2c"/>
<rect x="73.25" y="196.95" width="4.1" height="75.65" fill="#fff"/>
<rect x="74.05" y="197.75" width="2.4" height="61.36" fill="#74a9c7"/>
<rect x="74.05" y="197.75" width="2.4" height="1" fill="#5595b9"/>
<rect x="74.05" y="259.71" width="2.4" height="12.39" fill="#070c2c"/>
<rect x="77.25" y="196.57" width="4.1" height="76.03" fill="#fff"/>
<rect x="78.05" y="197.37" width="2.4" height="62.08" fill="#74a9c7"/>
<rect x="78.05" y="197.37" width="2.4" height="1" fill="#5595b9"/>
<rect x="78.05" y="260.05" width="2.4" height="12.05" fill="#070c2c"/>
<rect x="81.26" y="196.18" width="4.1" height="76.42" fill="#fff"/>
<rect x="82.06" y="196.98" width="2.4" height="62.80" fill="#74a9c7"/>
<rect x="82.06" y="196.98" width="2.4" height="1" fill="#5595b9"/>
<rect x="82.06" y="260.38" width="2.4" height="11.72" fill="#070c2c"/>
<rect x="85.27" y="195.80" width="4.1" height="76.80" fill="#fff"/>
<rect x="86.07" y="196.60" width="2.4" height="63.52" fill="#74a9c7"/>
<rect x="86.07" y="196.60" width="2.4" height="1" fill="#5595b9"/>
<rect x="86.07" y="260.72" width="2.4" height="11.38" fill="#070c2c"/>
<rect x="89.28" y="195.32" width="4.1" height="77.28" fill="#fff"/>
<rect x="90.08" y="196.12" width="2.4" height="64.33" fill="#74a9c7"/>
<rect x="90.08" y="196.12" width="2.4" height="1" fill="#5595b9"/>
<rect x="90.08" y="261.05" width="2.4" height="11.05" fill="#070c2c"/>
<rect x="93.28" y="194.84" width="4.1" height="77.76" fill="#fff"/>
<rect x="94.08" y="195.64" width="2.4" height="65.15" fill="#74a9c7"/>
<rect x="94.08" y="195.64" width="2.4" height="1" fill="#5595b9"/>
<rect x="94.08" y="261.39" width="2.4" height="10.71" fill="#070c2c"/>
<rect x="97.29" y="194.36" width="4.1" height="78.24" fill="#fff"/>
<rect x="98.09" y="195.16" width="2.4" height="65.97" fill="#74a9c7"/>
<rect x="98.09" y="195.16" width="2.4" height="1" fill="#5595b9"/>
<rect x="98.09" y="261.73" width="2.4" height="10.37" fill="#070c2c"/>
<rect x="101.30" y="193.88" width="4.1" height="78.72" fill="#fff"/>
<rect x="102.10" y="194.68" width="2.4" height="66.78" fill="#74a9c7"/>
<rect x="102.10" y="194.68" width="2.4" height="1" fill="#5595b9"/>
<rect x="102.10" y="262.06" width="2.4" height="10.04" fill="#070c2c"/>
<rect x="105.30" y="193.40" width="4.1" height="79.20" fill="#fff"/>
<rect x="106.10" y="194.20" width="2.4" height="67.60" fill="#74a9c7"/>
<rect x="106.10" y="194.20" width="2.4" height="1" fill="#5595b9"/>
<rect x="106.10" y="262.40" width="2.4" height="9.70" fill="#070c2c"/>
<rect x="109.31" y="192.93" width="4.1" height="79.67" fill="#fff"/>
<rect x="110.11" y="193.73" width="2.4" height="68.30" fill="#74a9c7"/>
<rect x="110.11" y="193.73" width="2.4" height="1" fill="#5595b9"/>
<rect x="110.11" y="262.63" width="2.4" height="9.47" fill="#070c2c"/>
<rect x="113.32" y="192.47" width="4.1" height="80.13" fill="#fff"/>
<rect x="114.12" y="193.27" width="2.4" height="69.00" fill="#74a9c7"/>
<rect x="114.12" y="193.27" width="2.4" height="1" fill="#5595b9"/>
<rect x="114.12" y="262.87" width="2.4" height="9.23" fill="#070c2c"/>
<rect x="117.33" y="192.00" width="4.1" height="80.60" fill="#fff"/>
<rect x="118.12" y="192.80" width="2.4" height="69.70" fill="#74a9c7"/>
<rect x="118.12" y="192.80" width="2.4" height="1" fill="#5595b9"/>
<rect x="118.12" y="263.10" width="2.4" height="9.00" fill="#070c2c"/>
<rect x="121.33" y="191.22" width="4.1" height="81.38" fill="#fff"/>
<rect x="122.13" y="192.02" width="2.4" height="70.71" fill="#74a9c7"/>
<rect x="122.13" y="192.02" width="2.4" height="1" fill="#5595b9"/>
<rect x="122.13" y="263.33" width="2.4" height="8.77" fill="#070c2c"/>
<rect x="125.34" y="190.44" width="4.1" height="82.16" fill="#fff"/>
<rect x="126.14" y="191.24" width="2.4" height="71.73" fill="#74a9c7"/>
<rect x="126.14" y="191.24" width="2.4" height="1" fill="#5595b9"/>
<rect x="126.14" y="263.57" width="2.4" height="8.53" fill="#070c2c"/>
<rect x="129.35" y="189.66" width="4.1" height="82.94" fill="#fff"/>
<rect x="130.15" y="190.46" width="2.4" height="72.74" fill="#74a9c7"/>
<rect x="130.15" y="190.46" width="2.4" height="1" fill="#5595b9"/>
<rect x="130.15" y="263.80" width="2.4" height="8.30" fill="#070c2c"/>
<rect x="133.35" y="188.88" width="4.1" height="83.72" fill="#fff"/>
<rect x="134.15" y="189.68" width="2.4" height="73.67" fill="#74a9c7"/>
<rect x="134.15" y="189.68" width="2.4" height="1" fill="#5595b9"/>
<rect x="134.15" y="263.95" width="2.4" height="8.15" fill="#070c2c"/>
<rect x="137.36" y="188.10" width="4.1" height="84.50" fill="#fff"/>
<rect x="138.16" y="188.90" width="2.4" height="74.60" fill="#74a9c7"/>
<rect x="138.16" y="188.90" width="2.4" height="1" fill="#5595b9"/>
<rect x="138.16" y="264.10" width="2.4" height="8.00" fill="#070c2c"/>
<rect x="141.37" y="187.40" width="4.1" height="85.20" fill="#fff"/>
<rect x="142.17" y="188.20" width="2.4" height="75.45" fill="#74a9c7"/>
<rect x="142.17" y="188.20" width="2.4" height="1" fill="#5595b9"/>
<rect x="142.17" y="264.25" width="2.4" height="7.85" fill="#070c2c"/>
<rect x="145.37" y="186.70" width="4.1" height="85.90" fill="#fff"/>
<rect x="146.17" y="187.50" width="2.4" height="76.30" fill="#74a9c7"/>
<rect x="146.17" y="187.50" width="2.4" height="1" fill="#5595b9"/>
<rect x="146.17" y="264.40" width="2.4" height="7.70" fill="#070c2c"/>
<rect x="149.38" y="186.00" width="4.1" height="86.60" fill="#fff"/>
<rect x="150.18" y="186.80" width="2.4" height="77.15" fill="#74a9c7"/>
<rect x="150.18" y="186.80" width="2.4" height="1" fill="#5595b9"/>
<rect x="150.18" y="264.55" width="2.4" height="7.55" fill="#070c2c"/>
<rect x="153.39" y="185.30" width="4.1" height="87.30" fill="#fff"/>
<rect x="154.19" y="186.10" width="2.4" height="78.00" fill="#74a9c7"/>
<rect x="154.19" y="186.10" width="2.4" height="1" fill="#5595b9"/>
<rect x="154.19" y="264.70" width="2.4" height="7.40" fill="#070c2c"/>
<rect x="157.39" y="184.60" width="4.1" height="88.00" fill="#fff"/>
<rect x="158.19" y="185.40" width="2.4" height="78.70" fill="#74a9c7"/>
<rect x="158.19" y="185.40" width="2.4" height="1" fill="#5595b9"/>
<rect x="158.19" y="264.70" width="2.4" height="7.40" fill="#070c2c"/>
<rect x="161.40" y="183.60" width="4.1" height="89.00" fill="#fff"/>
<rect x="162.20" y="184.40" width="2.4" height="79.70" fill="#74a9c7"/>
<rect x="162.20" y="184.40" width="2.4" height="1" fill="#5595b9"/>
<rect x="162.20" y="264.70" width="2.4" height="7.40" fill="#070c2c"/>
<rect x="165.41" y="182.60" width="4.1" height="90.00" fill="#fff"/>
<rect x="166.21" y="183.40" width="2.4" height="80.70" fill="#74a9c7"/>
<rect x="166.21" y="183.40" width="2.4" height="1" fill="#5595b9"/>
<rect x="166.21" y="264.70" width="2.4" height="7.40" fill="#070c2c"/>
<rect x="169.42" y="181.60" width="4.1" height="91.00" fill="#fff"/>
<rect x="170.22" y="182.40" width="2.4" height="81.70" fill="#74a9c7"/>
<rect x="170.22" y="182.40" width="2.4" height="1" fill="#5595b9"/>
<rect x="170.22" y="264.70" width="2.4" height="7.40" fill="#070c2c"/>
<rect x="173.42" y="180.60" width="4.1" height="92.00" fill="#fff"/>
<rect x="174.22" y="181.40" width="2.4" height="82.70" fill="#74a9c7"/>
<rect x="174.22" y="181.40" width="2.4" height="1" fill="#5595b9"/>
<rect x="174.22" y="264.70" width="2.4" height="7.40" fill="#070c2c"/>
<rect x="177.43" y="250.60" width="4.1" height="22.00" fill="#fff"/>
<rect x="178.23" y="251.40" width="2.4" height="10.60" fill="#82b3cf"/>
<rect x="178.23" y="251.40" width="2.4" height="1" fill="#5595b9"/>
<rect x="178.23" y="262.60" width="2.4" height="9.50" fill="#070c2c"/>
<rect x="181.44" y="251.20" width="4.1" height="21.40" fill="#fff"/>
<rect x="182.24" y="252.00" width="2.4" height="11.00" fill="#82b3cf"/>
<rect x="182.24" y="252.00" width="2.4" height="1" fill="#5595b9"/>
<rect x="182.24" y="263.60" width="2.4" height="8.50" fill="#070c2c"/>
<rect x="185.44" y="251.60" width="4.1" height="21.00" fill="#fff"/>
<rect x="186.24" y="252.40" width="2.4" height="11.20" fill="#82b3cf"/>
<rect x="186.24" y="252.40" width="2.4" height="1" fill="#5595b9"/>
<rect x="186.24" y="264.20" width="2.4" height="7.90" fill="#070c2c"/>
<rect x="189.45" y="252.10" width="4.1" height="20.50" fill="#fff"/>
<rect x="190.25" y="252.90" width="2.4" height="11.20" fill="#82b3cf"/>
<rect x="190.25" y="252.90" width="2.4" height="1" fill="#5595b9"/>
<rect x="190.25" y="264.70" width="2.4" height="7.40" fill="#070c2c"/>
<rect x="193.46" y="252.10" width="4.1" height="20.50" fill="#fff"/>
<rect x="194.26" y="252.90" width="2.4" height="11.20" fill="#82b3cf"/>
<rect x="194.26" y="252.90" width="2.4" height="1" fill="#5595b9"/>
<rect x="194.26" y="264.70" width="2.4" height="7.40" fill="#070c2c"/>
<rect x="197.46" y="252.10" width="4.1" height="20.50" fill="#fff"/>
<rect x="198.26" y="252.90" width="2.4" height="11.20" fill="#82b3cf"/>
<rect x="198.26" y="252.90" width="2.4" height="1" fill="#5595b9"/>
<rect x="198.26" y="264.70" width="2.4" height="7.40" fill="#070c2c"/>
<rect x="201.47" y="252.10" width="4.1" height="20.50" fill="#fff"/>
<rect x="202.27" y="252.90" width="2.4" height="11.20" fill="#82b3cf"/>
<rect x="202.27" y="252.90" width="2.4" height="1" fill="#5595b9"/>
<rect x="202.27" y="264.70" width="2.4" height="7.40" fill="#070c2c"/>
<rect x="205.48" y="252.10" width="4.1" height="20.50" fill="#fff"/>
<rect x="206.28" y="252.90" width="2.4" height="11.20" fill="#82b3cf"/>
<rect x="206.28" y="252.90" width="2.4" height="1" fill="#5595b9"/>
<rect x="206.28" y="264.70" width="2.4" height="7.40" fill="#070c2c"/>
<rect x="209.49" y="252.10" width="4.1" height="20.50" fill="#fff"/>
<rect x="210.29" y="252.90" width="2.4" height="11.20" fill="#82b3cf"/>
<rect x="210.29" y="252.90" width="2.4" height="1" fill="#5595b9"/>
<rect x="210.29" y="264.70" width="2.4" height="7.40" fill="#070c2c"/>
<rect x="213.49" y="252.10" width="4.1" height="20.50" fill="#fff"/>
<rect x="214.29" y="252.90" width="2.4" height="11.20" fill="#82b3cf"/>
<rect x="214.29" y="252.90" width="2.4" height="1" fill="#5595b9"/>
<rect x="214.29" y="264.70" width="2.4" height="7.40" fill="#070c2c"/>
<rect x="217.50" y="252.40" width="4.1" height="20.20" fill="#fff"/>
<rect x="218.30" y="253.20" width="2.4" height="10.90" fill="#82b3cf"/>
<rect x="218.30" y="253.20" width="2.4" height="1" fill="#5595b9"/>
<rect x="218.30" y="264.70" width="2.4" height="7.40" fill="#070c2c"/>
<rect x="221.51" y="252.40" width="4.1" height="20.20" fill="#fff"/>
<rect x="222.31" y="253.20" width="2.4" height="10.90" fill="#82b3cf"/>
<rect x="222.31" y="253.20" width="2.4" height="1" fill="#5595b9"/>
<rect x="222.31" y="264.70" width="2.4" height="7.40" fill="#070c2c"/>
<rect x="225.51" y="252.40" width="4.1" height="20.20" fill="#fff"/>
<rect x="226.31" y="253.20" width="2.4" height="10.90" fill="#82b3cf"/>
<rect x="226.31" y="253.20" width="2.4" height="1" fill="#5595b9"/>
<rect x="226.31" y="264.70" width="2.4" height="7.40" fill="#070c2c"/>
<rect x="229.52" y="252.40" width="4.1" height="20.20" fill="#fff"/>
<rect x="230.32" y="253.20" width="2.4" height="10.90" fill="#82b3cf"/>
<rect x="230.32" y="253.20" width="2.4" height="1" fill="#5595b9"/>
<rect x="230.32" y="264.70" width="2.4" height="7.40" fill="#070c2c"/>
<rect x="233.53" y="252.40" width="4.1" height="20.20" fill="#fff"/>
<rect x="234.33" y="253.20" width="2.4" height="10.90" fill="#82b3cf"/>
<rect x="234.33" y="253.20" width="2.4" height="1" fill="#5595b9"/>
<rect x="234.33" y="264.70" width="2.4" height="7.40" fill="#070c2c"/>
<rect x="237.53" y="252.40" width="4.1" height="20.20" fill="#fff"/>
<rect x="238.33" y="253.20" width="2.4" height="10.90" fill="#82b3cf"/>
<rect x="238.33" y="253.20" width="2.4" height="1" fill="#5595b9"/>
<rect x="238.33" y="264.70" width="2.4" height="7.40" fill="#070c2c"/>
<rect x="241.54" y="252.10" width="4.1" height="20.50" fill="#fff"/>
<rect x="242.34" y="252.90" width="2.4" height="11.20" fill="#82b3cf"/>
<rect x="242.34" y="252.90" width="2.4" height="1" fill="#5595b9"/>
<rect x="242.34" y="264.70" width="2.4" height="7.40" fill="#070c2c"/>
<rect x="245.55" y="252.10" width="4.1" height="20.50" fill="#fff"/>
<rect x="246.35" y="252.90" width="2.4" height="11.20" fill="#82b3cf"/>
<rect x="246.35" y="252.90" width="2.4" height="1" fill="#5595b9"/>
<rect x="246.35" y="264.70" width="2.4" height="7.40" fill="#070c2c"/>
<rect x="249.56" y="252.10" width="4.1" height="20.50" fill="#fff"/>
<rect x="250.36" y="252.90" width="2.4" height="11.20" fill="#82b3cf"/>
<rect x="250.36" y="252.90" width="2.4" height="1" fill="#5595b9"/>
<rect x="250.36" y="264.70" width="2.4" height="7.40" fill="#070c2c"/>
<rect x="253.56" y="251.80" width="4.1" height="20.80" fill="#fff"/>
<rect x="254.36" y="252.60" width="2.4" height="11.50" fill="#82b3cf"/>
<rect x="254.36" y="252.60" width="2.4" height="1" fill="#5595b9"/>
<rect x="254.36" y="264.70" width="2.4" height="7.40" fill="#070c2c"/>
<rect x="257.57" y="251.60" width="4.1" height="21.00" fill="#fff"/>
<rect x="258.37" y="252.40" width="2.4" height="11.70" fill="#82b3cf"/>
<rect x="258.37" y="252.40" width="2.4" height="1" fill="#5595b9"/>
<rect x="258.37" y="264.70" width="2.4" height="7.40" fill="#070c2c"/>
<rect x="261.03" y="176.0" width="1" height="96.70" fill="#bee395"/>
<rect x="261.83" y="176.00" width="4" height="1" fill="#bee395"/>
<text x="268.5" y="181.1" font-size="7.1" text-anchor="start" fill="#000" stroke="#000">800 000 000 000 $</text>
<rect x="261.83" y="199.90" width="4" height="1" fill="#bee395"/>
<text x="268.5" y="204.6" font-size="7.1" text-anchor="start" fill="#000" stroke="#000">600 000 000 000 $</text>
<rect x="261.83" y="223.90" width="4" height="1" fill="#bee395"/>
<text x="268.5" y="228.3" font-size="7.1" text-anchor="start" fill="#000" stroke="#000">400 000 000 000 $</text>
<rect x="261.83" y="247.80" width="4" height="1" fill="#bee395"/>
<text x="268.5" y="252.0" font-size="7.1" text-anchor="start" fill="#000" stroke="#000">200 000 000 000 $</text>
<rect x="261.83" y="271.70" width="4" height="1" fill="#bee395"/>
<text x="268.5" y="276.3" font-size="7.1" text-anchor="start" fill="#000" stroke="#000">0 $</text>
<text x="18.70" y="288.2" font-size="7.1" text-anchor="middle" fill="#000" stroke="#000">24 Jun</text>
<text x="66.79" y="288.2" font-size="7.1" text-anchor="middle" fill="#000" stroke="#000">06 Jul</text>
<text x="114.87" y="288.2" font-size="7.1" text-anchor="middle" fill="#000" stroke="#000">18 Jul</text>
<text x="162.96" y="288.2" font-size="7.1" text-anchor="middle" fill="#000" stroke="#000">30 Jul</text>
<text x="211.04" y="288.2" font-size="7.1" text-anchor="middle" fill="#000" stroke="#000">11 Aug</text>
<text x="259.12" y="288.2" font-size="7.1" text-anchor="middle" fill="#000" stroke="#000">23 Aug</text>
<text x="19.8" y="188.3" font-size="7.3" text-anchor="start" fill="#222" stroke="#222" textLength="79.3" lengthAdjust="spacingAndGlyphs" font-family='"DejaVu Sans", "Liberation Sans", sans-serif'>JS chart by amCharts</text>
<rect x="372.2" y="183.3" width="35.2" height="44.8" fill="#04315b" stroke="#0b1d40" stroke-width="0.9"/>
<rect x="408.9" y="183.3" width="173.9" height="44.8" fill="#92bdd6" stroke="#7fb2cd" stroke-width="0.9"/>
<text x="373" y="188.1" font-size="7.3" text-anchor="start" fill="#222" stroke="#222" textLength="79.3" lengthAdjust="spacingAndGlyphs" font-family='"DejaVu Sans", "Liberation Sans", sans-serif'>JS chart by amCharts</text>
<text x="390" y="209.7" font-size="7.1" text-anchor="middle" fill="#fff" stroke="#fff" font-weight="bold">17.4%</text>
<text x="496.5" y="209.7" font-size="7.0" text-anchor="middle" fill="#0b1f3c" stroke="#0b1f3c" font-weight="bold">82.6%</text>
<rect x="378.6" y="246.9" width="11.4" height="4.8" fill="#04315b" stroke="#0b1d40" stroke-width="0.8"/>
<text x="394" y="252.1" font-size="7.1" text-anchor="start" fill="#000" stroke="#000">Total Cost of Sales (COGS)</text>
<rect x="378.6" y="258.8" width="11.4" height="4.8" fill="#92bdd6" stroke="#7fb2cd" stroke-width="0.8"/>
<text x="394" y="264.0" font-size="7.1" text-anchor="start" fill="#000" stroke="#000">Total Sales and Marketing Expenses</text>
<rect x="378.6" y="270.7" width="11.4" height="4.8" fill="#dbe9f6" stroke="#cfe0f0" stroke-width="0.8"/>
<text x="394" y="275.9" font-size="7.1" text-anchor="start" fill="#000" stroke="#000">Total Research and Development Expenses</text>
<rect x="378.6" y="282.6" width="11.4" height="4.8" fill="#9eabb4" stroke="#87959f" stroke-width="0.8"/>
<text x="394" y="287.8" font-size="7.1" text-anchor="start" fill="#000" stroke="#000">Total General and Adminstrative Expenses</text>
<rect x="564.9" y="298.9" width="5.4" height="5.1" rx="0.5" fill="#fff" stroke="#1169c0" stroke-width="0.9"/>
<path d="M566.2 301.45h2.9M567.6 300.1v2.7" stroke="#1169c0" stroke-width="0.9" fill="none"/>
<text x="573.6" y="304.6" font-size="8.2" text-anchor="start" fill="#1169c0" stroke="#1169c0" textLength="23.2" lengthAdjust="spacingAndGlyphs">Details</text>
<rect x="3.4" y="307.3" width="593.2" height="15.8" fill="#f3f4f7" stroke="#cfd9e6" stroke-width="1"/>
<rect x="235.7" y="307.3" width="1" height="15.8" fill="#cfd9e6"/>
<rect x="320.0" y="307.3" width="1" height="15.8" fill="#cfd9e6"/>
<rect x="405.9" y="307.3" width="1" height="15.8" fill="#cfd9e6"/>
<rect x="497.8" y="307.3" width="1" height="15.8" fill="#cfd9e6"/>
<rect x="3.4" y="340.59999999999997" width="593.2" height="1.2" fill="#cfd9e6"/>
<rect x="3.4" y="358.7" width="593.2" height="1.2" fill="#cfd9e6"/>
<rect x="3.4" y="376.7" width="593.2" height="1.2" fill="#cfd9e6"/>
<rect x="3.4" y="394.7" width="593.2" height="1.2" fill="#cfd9e6"/>
<text x="119.5" y="318" font-size="7.1" text-anchor="middle" fill="#222" stroke="#222">Item</text>
<text x="278" y="318" font-size="7.1" text-anchor="middle" fill="#222" stroke="#222">Week</text>
<text x="363.3" y="318" font-size="7.1" text-anchor="middle" fill="#222" stroke="#222">Previous</text>
<text x="452" y="318" font-size="7.1" text-anchor="middle" fill="#222" stroke="#222">Oct 07 year</text>
<text x="547.6" y="318" font-size="7.1" text-anchor="middle" fill="#222" stroke="#222">07 year</text>
<circle cx="12.6" cy="333.2" r="5.2" fill="#b9c3d1" stroke="#adb8c8" stroke-width="0.8"/>
<text x="12.5" y="336.0" font-size="7.6" text-anchor="middle" fill="#fff" stroke="#fff">1</text>
<text x="21.6" y="335.0" font-size="6.55" text-anchor="start" fill="#1b75bb" stroke="#1b75bb">TOTAL SALES REVENUE</text>
<text x="317.3" y="335.0" font-size="6.66" text-anchor="end" fill="#111" stroke="#111" letter-spacing="-0.17">$905 799 823 909</text>
<text x="402.2" y="335.0" font-size="6.66" text-anchor="end" fill="#111" stroke="#111" letter-spacing="-0.17">$897 744 578 152</text>
<text x="495" y="335.0" font-size="6.66" text-anchor="end" fill="#111" stroke="#111" letter-spacing="-0.17">$2 710 837 226 153</text>
<text x="592.8" y="335.0" font-size="6.66" text-anchor="end" fill="#111" stroke="#111" letter-spacing="-0.17">$36 796 063 388 465</text>
<circle cx="12.6" cy="351.2" r="5.2" fill="#b9c3d1" stroke="#adb8c8" stroke-width="0.8"/>
<text x="12.5" y="354.0" font-size="7.6" text-anchor="middle" fill="#fff" stroke="#fff">2</text>
<text x="21.6" y="353.0" font-size="6.55" text-anchor="start" fill="#111" stroke="#111">TOTAL COST OF SALES (COGS)</text>
<text x="317.3" y="353.0" font-size="6.66" text-anchor="end" fill="#111" stroke="#111" letter-spacing="-0.17">$60 163 233 832</text>
<text x="402.2" y="353.0" font-size="6.66" text-anchor="end" fill="#111" stroke="#111" letter-spacing="-0.17">$59 641 226 935</text>
<text x="495" y="353.0" font-size="6.66" text-anchor="end" fill="#111" stroke="#111" letter-spacing="-0.17">$179 923 484 101</text>
<text x="592.8" y="353.0" font-size="6.66" text-anchor="end" fill="#111" stroke="#111" letter-spacing="-0.17">$2 932 988 165 965</text>
<circle cx="12.6" cy="369.2" r="5.2" fill="#b9c3d1" stroke="#adb8c8" stroke-width="0.8"/>
<text x="12.5" y="372.0" font-size="7.6" text-anchor="middle" fill="#fff" stroke="#fff">3</text>
<text x="21" y="371.0" font-size="6.83" text-anchor="start" fill="#000" stroke="#000" font-weight="bold">GROSS PROFIT</text>
<text x="317.3" y="371.0" font-size="6.66" text-anchor="end" fill="#111" stroke="#111" font-weight="bold">$845 636 590 077</text>
<text x="402.2" y="371.0" font-size="6.66" text-anchor="end" fill="#111" stroke="#111" font-weight="bold">$838 103 351 217</text>
<text x="495" y="371.0" font-size="6.66" text-anchor="end" fill="#111" stroke="#111" font-weight="bold">$2 530 913 742 052</text>
<text x="592.8" y="371.0" font-size="6.66" text-anchor="end" fill="#111" stroke="#111" font-weight="bold">$33 863 075 222 500</text>
<circle cx="12.6" cy="387.2" r="5.2" fill="#b9c3d1" stroke="#adb8c8" stroke-width="0.8"/>
<text x="12.5" y="390.0" font-size="7.6" text-anchor="middle" fill="#fff" stroke="#fff">4</text>
<text x="21.6" y="389.0" font-size="6.55" text-anchor="start" fill="#1b75bb" stroke="#1b75bb">TOTAL SALES AND MARKETING EXPENSES</text>
<text x="317.3" y="389.0" font-size="6.66" text-anchor="end" fill="#111" stroke="#111" letter-spacing="-0.17">$105 135 865 672</text>
<text x="402.2" y="389.0" font-size="6.66" text-anchor="end" fill="#111" stroke="#111" letter-spacing="-0.17">$105 160 255 123</text>
<text x="495" y="389.0" font-size="6.66" text-anchor="end" fill="#111" stroke="#111" letter-spacing="-0.17">$311 793 883 612</text>
<text x="592.8" y="389.0" font-size="6.66" text-anchor="end" fill="#111" stroke="#111" letter-spacing="-0.17">$15 333 851 361 520</text>
<circle cx="12.6" cy="405.2" r="5.2" fill="#b9c3d1" stroke="#adb8c8" stroke-width="0.8"/>
</svg>
</body></html>
